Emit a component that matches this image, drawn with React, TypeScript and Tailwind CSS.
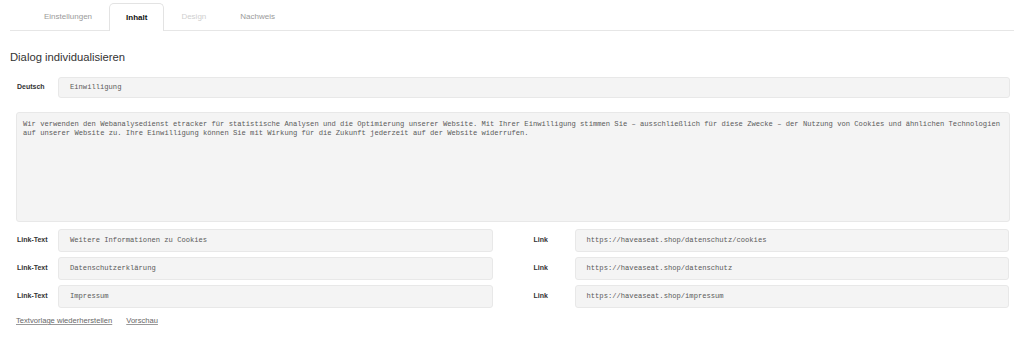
import React from "react";

const sans = "font-['Liberation_Sans',Arial,sans-serif]";
const mono = "font-['Liberation_Mono','Courier_New',monospace]";

interface FieldProps {
  value: string;
  className?: string;
}

const Field = ({ value, className = "" }: FieldProps) => (
  <div
    className={`flex flex-1 items-center rounded-[3px] border border-[#e8e8e8] bg-[#f4f4f4] pl-[11px] text-[7.15px] leading-none text-[#5a5a5a] ${mono} ${className}`}
  >
    <span className="whitespace-nowrap">{value}</span>
  </div>
);

const Label = ({ text }: { text: string }) => (
  <div
    className={`w-[42px] shrink-0 pl-px text-[7px] font-bold text-[#333] ${sans}`}
  >
    {text}
  </div>
);

const tabs = [
  { name: "Einstellungen", state: "idle" },
  { name: "Inhalt", state: "active" },
  { name: "Design", state: "disabled" },
  { name: "Nachweis", state: "idle" },
];

const linkRows = [
  {
    text: "Weitere Informationen zu Cookies",
    url: "https://haveaseat.shop/datenschutz/cookies",
  },
  {
    text: "Datenschutzerklärung",
    url: "https://haveaseat.shop/datenschutz",
  },
  { text: "Impressum", url: "https://haveaseat.shop/impressum" },
];

export default function App() {
  return (
    <div className={`h-[337px] w-[1024px] bg-white ${sans}`}>
      {/* tabs */}
      <div className="mx-[10px] flex h-[31px] items-end border-b border-[#e6e6e6] pl-[17px]">
        {tabs.map((tab) => (
          <div
            key={tab.name}
            className={
              tab.state === "active"
                ? "-mb-px flex h-[28px] items-center rounded-t-[5px] border border-b-0 border-[#e3e3e3] bg-white px-[16px] pt-px text-[8px] font-bold text-[#111]"
                : `flex h-[28px] items-center px-[17px] pt-px text-[8px] ${
                    tab.state === "disabled" ? "text-[#cfcfcf]" : "text-[#9a9a9a]"
                  }`
            }
          >
            {tab.name}
          </div>
        ))}
      </div>

      <h2 className="ml-[10px] mt-[19px] text-[11.25px] leading-[14px] text-[#333]">
        Dialog individualisieren
      </h2>

      <div className="pl-[16px] pr-[14px]">
        {/* language row */}
        <div className="mt-[13px] flex h-[21px] items-center">
          <Label text="Deutsch" />
          <Field value="Einwilligung" className="h-[21px]" />
        </div>

        {/* body text */}
        <div
          className={`mt-[14px] h-[110px] rounded-[3px] border border-[#e8e8e8] bg-[#f4f4f4] pl-[6px] pt-[7px] text-[7.15px] leading-[8.5px] text-[#5a5a5a] ${mono}`}
        >
          <p className="whitespace-nowrap">
            Wir verwenden den Webanalysedienst etracker für statistische
            Analysen und die Optimierung unserer Website. Mit Ihrer Einwilligung
            stimmen Sie – ausschließlich für diese Zwecke – der Nutzung von
            Cookies und ähnlichen Technologien
          </p>
          <p className="whitespace-nowrap">
            auf unserer Website zu. Ihre Einwilligung können Sie mit Wirkung für
            die Zukunft jederzeit auf der Website widerrufen.
          </p>
        </div>

        {/* link rows */}
        <div className="mt-[7px] grid grid-cols-2 gap-x-[40px] gap-y-[5px] pr-px">
          {linkRows.map((row) => (
            <React.Fragment key={row.url}>
              <div className="flex h-[23px] items-center">
                <Label text="Link-Text" />
                <Field value={row.text} className="h-[23px]" />
              </div>
              <div className="flex h-[23px] items-center">
                <Label text="Link" />
                <Field value={row.url} className="h-[23px]" />
              </div>
            </React.Fragment>
          ))}
        </div>

        <div className="mt-[8px] flex gap-[14px] text-[7.6px] leading-[10px] text-[#666]">
          <a href="#" className="underline decoration-[#999]">
            Textvorlage wiederherstellen
          </a>
          <a href="#" className="underline decoration-[#999]">
            Vorschau
          </a>
        </div>
      </div>
    </div>
  );
}
